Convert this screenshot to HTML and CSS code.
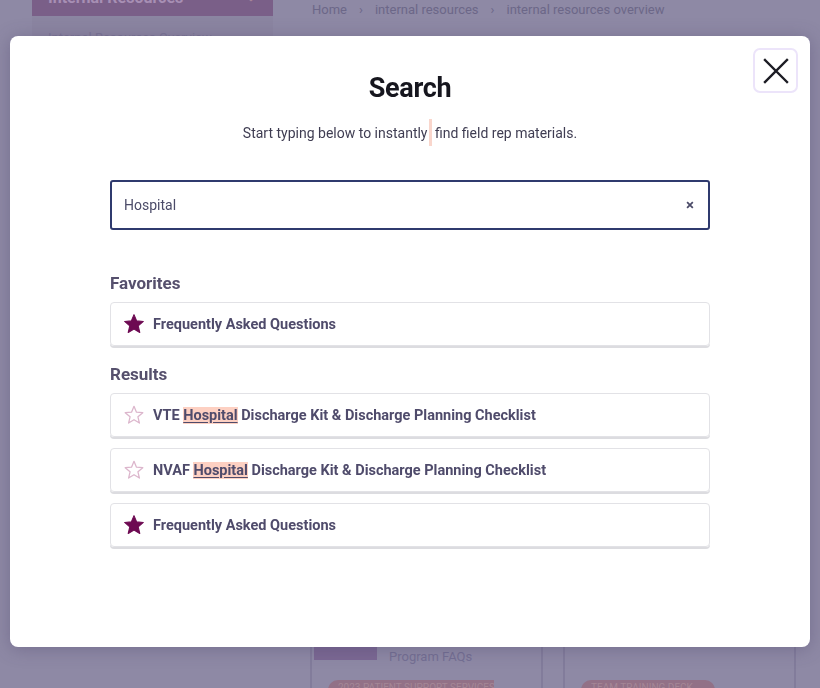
FILE: index.html
```html
<!DOCTYPE html>
<html lang="en">
<head>
<meta charset="utf-8">
<title>Search</title>
<link rel="stylesheet" href="styles.css">
</head>
<body>
<div class="page">
  <aside class="sidebar">
    <div class="side-head">Internal Resources <span class="chev">⌄</span></div>
    <div class="side-body">
      <div class="side-link">Internal Resources Overview</div>
    </div>
  </aside>
  <main class="main">
    <nav class="crumbs">
      <span>Home</span><span class="sep">›</span><span>internal resources</span><span class="sep">›</span><span>internal resources overview</span>
    </nav>
    <div class="cols">
      <div class="col">
        <div class="col-row"><div class="col-thumb"></div><div class="col-text">Program FAQs</div></div>
        <div class="pill wide">2023 PATIENT SUPPORT SERVICES</div>
      </div>
      <div class="col">
        <div class="col-row"></div>
        <div class="pill">TEAM TRAINING DECK</div>
      </div>
    </div>
  </main>
</div>

<div class="overlay">
  <div class="modal">
    <button class="close" aria-label="Close">
      <svg width="26" height="26" viewBox="0 0 26 26"><path d="M2 2 L24 24 M24 2 L2 24" stroke="#1c1c24" stroke-width="2.4" stroke-linecap="square"/></svg>
    </button>
    <h1 class="title">Search</h1>
    <p class="sub">Start typing below to instantly<span class="caret"></span> find field rep materials.</p>
    <div class="field">
      <span class="value">Hospital</span>
      <span class="clear">×</span>
    </div>

    <h2 class="sec">Favorites</h2>
    <div class="list">
      <div class="card"><svg class="star" viewBox="0 0 24 24"><path d="M12 1.8 L14.9 8.6 L22.2 9.2 L16.6 14 L18.3 21.2 L12 17.4 L5.7 21.2 L7.4 14 L1.8 9.2 L9.1 8.6 Z" fill="#6d0a52" stroke="#6d0a52" stroke-width="1.2" stroke-linejoin="round"/></svg><span>Frequently Asked Questions</span></div>
    </div>

    <h2 class="sec sec-results">Results</h2>
    <div class="list">
      <div class="card"><svg class="star" viewBox="0 0 24 24"><path d="M12 2.5 L14.7 8.9 L21.6 9.5 L16.3 14 L17.9 20.8 L12 17.2 L6.1 20.8 L7.7 14 L2.4 9.5 L9.3 8.9 Z" fill="none" stroke="#dcb6cc" stroke-width="1.4" stroke-linejoin="round"/></svg><span>VTE <mark>Hospital</mark> Discharge Kit &amp; Discharge Planning Checklist</span></div>
      <div class="card"><svg class="star" viewBox="0 0 24 24"><path d="M12 2.5 L14.7 8.9 L21.6 9.5 L16.3 14 L17.9 20.8 L12 17.2 L6.1 20.8 L7.7 14 L2.4 9.5 L9.3 8.9 Z" fill="none" stroke="#dcb6cc" stroke-width="1.4" stroke-linejoin="round"/></svg><span>NVAF <mark>Hospital</mark> Discharge Kit &amp; Discharge Planning Checklist</span></div>
      <div class="card"><svg class="star" viewBox="0 0 24 24"><path d="M12 1.8 L14.9 8.6 L22.2 9.2 L16.6 14 L18.3 21.2 L12 17.4 L5.7 21.2 L7.4 14 L1.8 9.2 L9.1 8.6 Z" fill="#6d0a52" stroke="#6d0a52" stroke-width="1.2" stroke-linejoin="round"/></svg><span>Frequently Asked Questions</span></div>
    </div>
  </div>
</div>
</body>
</html>
```
FILE: styles.css
```css
* { box-sizing: border-box; }
html, body { margin: 0; padding: 0; }
body {
  width: 820px;
  height: 688px;
  overflow: hidden;
  background: #8e89a5;
  font-family: Roboto, "Noto Sans", sans-serif;
}
.page {
  display: flex;
  gap: 39px;
  padding-left: 32px;
  height: 688px;
}
.sidebar {
  width: 241px;
  margin-top: -18px;
  display: flex;
  flex-direction: column;
}
.side-head {
  background: #7a5f88;
  height: 34px;
  color: #a78fb4;
  font-weight: 700;
  font-size: 16px;
  padding: 6px 16px;
  display: flex;
  justify-content: space-between;
}
.chev { color: #a68498; font-size: 14px; }
.side-body {
  background: #8b85a1;
  height: 200px;
  padding: 14px 16px;
}
.side-link { color: #7c7596; font-size: 13px; }
.main { flex: 1; }
.crumbs {
  display: flex;
  gap: 12px;
  font-size: 13px;
  color: #6c6788;
  padding-top: 2px;
  height: 646px;
}
.crumbs .sep { color: #6c6788; }
.cols {
  display: flex;
  gap: 20px;
  margin-left: -2px;
}
.col {
  width: 233px;
  height: 60px;
  border-left: 2px solid #827c9b;
  border-right: 2px solid #827c9b;
  padding-left: 2px;
}
.col-row { display: flex; gap: 12px; height: 34px; }
.col-thumb { width: 63px; height: 14px; background: #7b6893; }
.col-text { color: #746f93; font-size: 13px; padding-top: 3px; }
.pill {
  margin: 0 0 0 14px;
  width: 134px;
  height: 20px;
  border-radius: 10px;
  background: #927187;
  color: #a48796;
  font-size: 10px;
  padding: 2px 10px;
  overflow: hidden;
  white-space: nowrap;
}
.pill.wide { width: 166px; border-radius: 10px 0 0 10px; }

.overlay {
  position: fixed;
  inset: 0;
  padding: 36px 10px 41px 10px;
}
.modal {
  position: relative;
  height: 611px;
  background: #ffffff;
  border-radius: 8px;
  box-shadow: 0 2px 18px rgba(70, 60, 100, 0.35);
  padding: 36px 100px 0 100px;
}
.close {
  position: absolute;
  top: 12px;
  right: 12px;
  width: 45px;
  height: 45px;
  border: 2px solid #ece4fa;
  border-radius: 7px;
  background: #fff;
  display: flex;
  align-items: center;
  justify-content: center;
  padding: 0;
}
.title {
  margin: 0;
  text-align: center;
  font-size: 27px;
  font-weight: 700;
  color: #16161e;
  line-height: 32px;
  letter-spacing: -0.3px;
}
.sub {
  margin: 16px 0 0;
  text-align: center;
  font-size: 14px;
  color: #3f3d52;
  line-height: 26px;
}
.caret {
  display: inline-block;
  width: 3px;
  height: 27px;
  background: #f9d6cc;
  vertical-align: middle;
  margin: -4px 0 0 1px;
}
.field {
  margin-top: 34px;
  height: 50px;
  border: 2px solid #2f3a6e;
  border-radius: 3px;
  display: flex;
  align-items: center;
  justify-content: space-between;
  padding: 0 14px 0 12px;
  color: #4b4b68;
  font-size: 14px;
}
.clear { font-size: 15px; font-weight: 700; color: #4b4b68; }
.sec {
  margin: 43px 0 9px;
  font-size: 17px;
  font-weight: 700;
  color: #56506d;
  line-height: 20px;
}
.sec-results { margin-top: 18px; }
.list { display: flex; flex-direction: column; gap: 11px; }
.card {
  height: 44px;
  border: 1px solid #e2e2e6;
  border-radius: 4px;
  box-shadow: 0 2px 0 #dcdce0;
  display: flex;
  align-items: center;
  gap: 8px;
  padding: 0 12px;
  font-size: 14.5px;
  font-weight: 700;
  color: #4f4b6b;
}
.star { width: 22px; height: 22px; flex: none; }
mark {
  background: #fdd0c2;
  color: #4f4b6b;
  text-decoration: underline;
  text-underline-offset: 2px;
}
```
